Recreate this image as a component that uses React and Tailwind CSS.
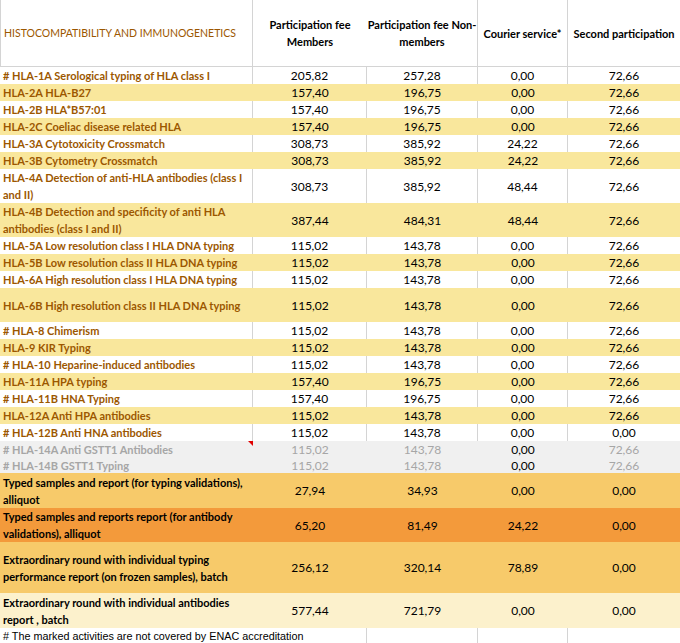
const YELLOW = "bg-[#f9e79c]";
const WHITE = "bg-white";
const GREY = "bg-[#f0f0f0]";
const LIGHT_ORANGE = "bg-[#f7ca6a]";
const ORANGE = "bg-[#f39a3b]";
const CREAM = "bg-[#fcf1cc]";

const rows = [
	{ label: ["# HLA-1A Serological typing of HLA class I"], v: ["205,82", "257,28", "0,00", "72,66"], bg: WHITE },
	{ label: ["HLA-2A HLA-B27"], v: ["157,40", "196,75", "0,00", "72,66"], bg: YELLOW },
	{ label: ["HLA-2B HLA*B57:01"], v: ["157,40", "196,75", "0,00", "72,66"], bg: WHITE },
	{ label: ["HLA-2C Coeliac disease related HLA"], v: ["157,40", "196,75", "0,00", "72,66"], bg: YELLOW },
	{ label: ["HLA-3A Cytotoxicity Crossmatch"], v: ["308,73", "385,92", "24,22", "72,66"], bg: WHITE },
	{ label: ["HLA-3B Cytometry Crossmatch"], v: ["308,73", "385,92", "24,22", "72,66"], bg: YELLOW },
	{ label: ["HLA-4A Detection of anti-HLA antibodies (class I", "and II)"], v: ["308,73", "385,92", "48,44", "72,66"], bg: WHITE, h: "h-[34px]" },
	{ label: ["HLA-4B Detection and specificity of anti HLA", "antibodies (class I and II)"], v: ["387,44", "484,31", "48,44", "72,66"], bg: YELLOW, h: "h-[34px]" },
	{ label: ["HLA-5A Low resolution class I HLA DNA typing"], v: ["115,02", "143,78", "0,00", "72,66"], bg: WHITE },
	{ label: ["HLA-5B Low resolution class II HLA DNA typing"], v: ["115,02", "143,78", "0,00", "72,66"], bg: YELLOW },
	{ label: ["HLA-6A High resolution class I HLA DNA typing"], v: ["115,02", "143,78", "0,00", "72,66"], bg: WHITE },
	{ label: ["HLA-6B High resolution class II HLA DNA typing"], v: ["115,02", "143,78", "0,00", "72,66"], bg: YELLOW, h: "h-[34px]" },
	{ label: ["# HLA-8 Chimerism"], v: ["115,02", "143,78", "0,00", "72,66"], bg: WHITE },
	{ label: ["HLA-9 KIR Typing"], v: ["115,02", "143,78", "0,00", "72,66"], bg: YELLOW },
	{ label: ["# HLA-10 Heparine-induced antibodies"], v: ["115,02", "143,78", "0,00", "72,66"], bg: WHITE },
	{ label: ["HLA-11A HPA typing"], v: ["157,40", "196,75", "0,00", "72,66"], bg: YELLOW },
	{ label: ["# HLA-11B HNA Typing"], v: ["157,40", "196,75", "0,00", "72,66"], bg: WHITE },
	{ label: ["HLA-12A Anti HPA antibodies"], v: ["115,02", "143,78", "0,00", "72,66"], bg: YELLOW },
	{ label: ["# HLA-12B Anti HNA antibodies"], v: ["115,02", "143,78", "0,00", "0,00"], bg: WHITE },
	{ label: ["# HLA-14A Anti GSTT1 Antibodies"], v: ["115,02", "143,78", "0,00", "72,66"], bg: GREY, h: "h-[16px]", note: true },
	{ label: ["# HLA-14B GSTT1 Typing"], v: ["115,02", "143,78", "0,00", "72,66"], bg: GREY, h: "h-[16px]" },
	{ label: ["Typed samples and report (for typing validations),", "alliquot"], v: ["27,94", "34,93", "0,00", "0,00"], bg: LIGHT_ORANGE, h: "h-[35px]", dark: true },
	{ label: ["Typed samples and reports report (for antibody", "validations), alliquot"], v: ["65,20", "81,49", "24,22", "0,00"], bg: ORANGE, h: "h-[34px]", dark: true },
	{ label: ["Extraordinary round with individual typing", "performance report (on frozen samples), batch"], v: ["256,12", "320,14", "78,89", "0,00"], bg: LIGHT_ORANGE, h: "h-[51px]", dark: true },
	{ label: ["Extraordinary round with individual antibodies", "report , batch"], v: ["577,44", "721,79", "0,00", "0,00"], bg: CREAM, h: "h-[35px]", dark: true },
];

const cols = "grid grid-cols-[253px_114px_111px_90px_112px]";

function Row({ row }) {
	const white = row.bg === WHITE;
	const grey = row.bg === GREY;
	const line = white ? "border-r border-[#d4d4d4]" : "";
	const labelColor = row.dark ? "text-black" : grey ? "text-[#a6a6a6]" : "text-[#9c5700]";
	return (
		<div className={`${cols} ${row.bg} ${row.h || "h-[17px]"} text-[12px] leading-[17px]`}>
			<div className={`relative flex flex-col justify-center pl-[3px] text-[11px] font-bold ${labelColor} ${line}`}>
				{row.label.map((l) => (
					<span key={l} className="whitespace-nowrap">{l}</span>
				))}
				{row.note && (
					<span className="absolute right-0 top-0 w-0 h-0 border-t-[5px] border-l-[5px] border-t-[#e00000] border-l-transparent" />
				)}
			</div>
			{row.v.map((v, i) => (
				<div
					key={i}
					className={`flex items-center justify-center ${i < 3 ? line : ""} ${grey && i !== 2 ? "text-[#a6a6a6]" : "text-black"}`}
				>
					{v}
				</div>
			))}
		</div>
	);
}

export default function App() {
	return (
		<div className="w-[680px] h-[643px] overflow-hidden bg-white font-['Lato',sans-serif]">
			<div className={`${cols} h-[67px] border-b border-[#d4d4d4] text-[11px] leading-[17px]`}>
				<div className="flex items-center pl-[3px] border-l border-r border-[#d4d4d4] text-[10.5px] text-[#9c5700] whitespace-nowrap">
					HISTOCOMPATIBILITY AND IMMUNOGENETICS
				</div>
				<div className="flex items-center justify-center text-center font-bold">
					Participation fee
					<br />
					Members
				</div>
				<div className="flex items-center justify-center text-center font-bold border-r border-[#d4d4d4] whitespace-nowrap">
					Participation fee Non-
					<br />
					members
				</div>
				<div className="flex items-center justify-center font-bold border-r border-[#d4d4d4] whitespace-nowrap">
					Courier service*
				</div>
				<div className="flex items-center justify-center font-bold whitespace-nowrap">Second participation</div>
			</div>
			{rows.map((r, i) => (
				<Row key={i} row={r} />
			))}
			<div className={`${cols} h-[16px] text-[10.8px] leading-[16px]`}>
				<div className="pl-[3px] whitespace-nowrap font-['Liberation_Sans',sans-serif] text-black">
					# The marked activities are not covered by ENAC accreditation
				</div>
				<div className="border-r border-[#d4d4d4]" />
				<div className="border-r border-[#d4d4d4]" />
				<div className="border-r border-[#d4d4d4]" />
				<div />
			</div>
		</div>
	);
}
